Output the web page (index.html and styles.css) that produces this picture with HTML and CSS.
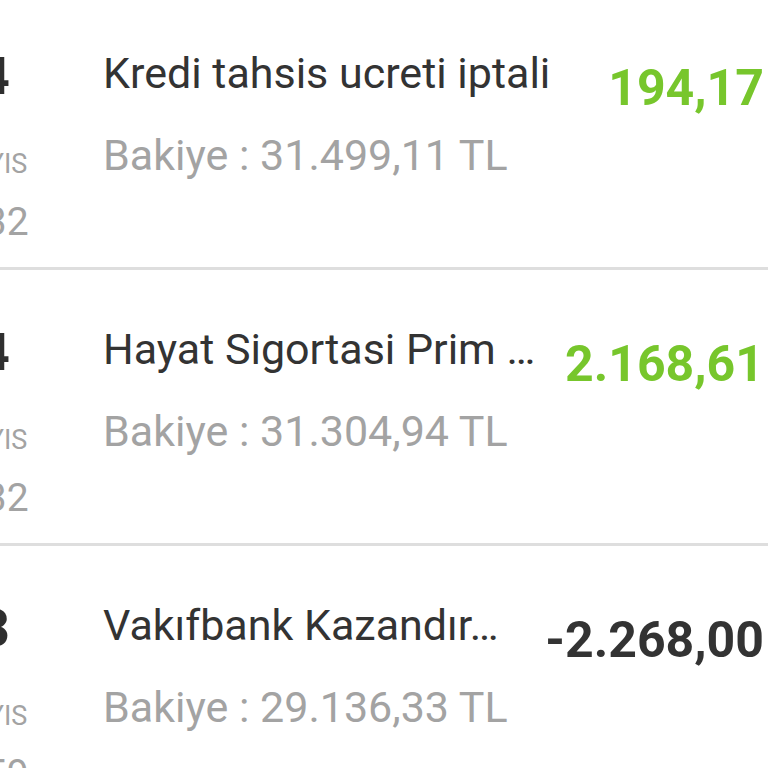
FILE: index.html
```html
<!DOCTYPE html>
<html lang="tr">
<head>
<meta charset="utf-8">
<link rel="stylesheet" href="styles.css">
</head>
<body>
<ul class="list">
  <li class="row">
    <div class="date">
      <div class="day">24</div>
      <div class="month">MAYIS</div>
      <div class="time">09:32</div>
    </div>
    <div class="info">
      <div class="title">Kredi tahsis ucreti iptali</div>
      <div class="balance">Bakiye : 31.499,11 TL</div>
    </div>
    <div class="amount positive">194,17</div>
  </li>
  <li class="row">
    <div class="date">
      <div class="day">24</div>
      <div class="month">MAYIS</div>
      <div class="time">09:32</div>
    </div>
    <div class="info">
      <div class="title">Hayat Sigortasi Prim …</div>
      <div class="balance">Bakiye : 31.304,94 TL</div>
    </div>
    <div class="amount positive">2.168,61</div>
  </li>
  <li class="row">
    <div class="date">
      <div class="day">23</div>
      <div class="month">MAYIS</div>
      <div class="time">16:59</div>
    </div>
    <div class="info">
      <div class="title">Vakıfbank Kazandır…</div>
      <div class="balance">Bakiye : 29.136,33 TL</div>
    </div>
    <div class="amount">-2.268,00</div>
  </li>
</ul>
</body>
</html>
```
FILE: styles.css
```css
html, body {
  margin: 0;
  padding: 0;
  background: #ffffff;
  overflow: hidden;
}
body {
  width: 768px;
  height: 768px;
  font-family: Roboto, "Noto Sans", sans-serif;
}
.list {
  list-style: none;
  margin: -6px 0 0 0;
  padding: 0;
}
.row {
  display: flex;
  align-items: flex-start;
  height: 273px;
  border-bottom: 3px solid #dedede;
}
.date {
  flex: 0 0 140px;
  margin-left: -90px;
  display: flex;
  flex-direction: column;
  align-items: center;
  padding-top: 53px;
}
.day {
  font-size: 52px;
  line-height: 60px;
  font-weight: 700;
  color: #2f2f2f;
}
.month {
  margin-top: 41px;
  margin-left: 15px;
  font-size: 27px;
  line-height: 32px;
  color: #a3a3a3;
}
.time {
  margin-top: 19px;
  font-size: 39px;
  line-height: 46px;
  color: #a3a3a3;
}
.info {
  flex: 1 1 auto;
  min-width: 0;
  margin-left: 53px;
  padding-top: 54px;
}
.title {
  font-size: 43px;
  line-height: 50px;
  color: #333333;
  white-space: nowrap;
}
.balance {
  margin-top: 32px;
  font-size: 43px;
  line-height: 50px;
  color: #a3a3a3;
  white-space: nowrap;
}
.amount {
  flex: 0 0 auto;
  padding-top: 65px;
  padding-right: 4px;
  font-size: 50px;
  line-height: 58px;
  font-weight: 700;
  color: #333333;
  white-space: nowrap;
  text-align: right;
}
.amount.positive {
  color: #77c62c;
}
```
